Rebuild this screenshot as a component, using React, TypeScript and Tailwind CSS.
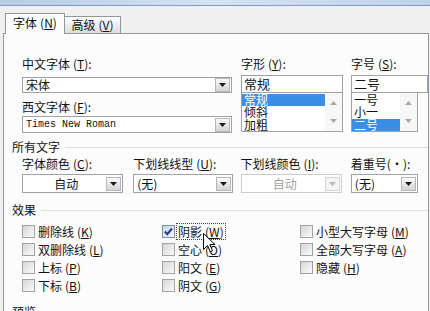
import React from 'react';

const cjk = "font-['Noto_Sans_CJK_SC','Noto_Sans_CJK_JP',sans-serif]";

function Key({ k }: { k: string }) {
  return (
    <span className="ml-[3px]">
      (<span className="underline underline-offset-[1px]">{k}</span>)
    </span>
  );
}

function Label({ text, k, colon = true }: { text: string; k?: string; colon?: boolean }) {
  return (
    <div className="h-[14px] leading-[14px] text-[12px] text-[#111] whitespace-nowrap">
      {text}
      {k && <Key k={k} />}
      {colon && ':'}
    </div>
  );
}

function DropBtn({ disabled }: { disabled?: boolean }) {
  return (
    <div
      className={`mr-px w-[15px] h-[14px] shrink-0 flex items-center justify-center border ${
        disabled ? 'border-[#d3d6da] bg-[#f4f4f4]' : 'border-[#b3b7bc] bg-linear-to-b from-[#fafafa] to-[#d4d4d4]'
      }`}
    >
      <svg width="7" height="4" viewBox="0 0 7 4">
        <path d="M0 0h7L3.5 4z" fill={disabled ? '#b8b8b8' : '#1a1a1a'} />
      </svg>
    </div>
  );
}

function Combo({
  text,
  className,
  center,
  mono,
  disabled,
}: {
  text: string;
  className: string;
  center?: boolean;
  mono?: boolean;
  disabled?: boolean;
}) {
  return (
    <div
      className={`flex items-center bg-white border ${disabled ? 'border-[#c9ccd0]' : 'border-[#9ba2aa]'} ${className}`}
    >
      <div
        className={`flex-1 min-w-0 overflow-hidden whitespace-nowrap pl-[3px] leading-[14px] ${center ? 'text-center' : ''} ${
          mono ? "font-['Liberation_Mono',monospace] text-[10px]" : 'text-[12px]'
        } ${disabled ? 'text-[#a0a0a0]' : 'text-[#111]'}`}
      >
        {text}
      </div>
      <DropBtn disabled={disabled} />
    </div>
  );
}

function ScrollBar() {
  return (
    <div className="w-[17px] shrink-0 bg-[#f7f7f7] flex flex-col items-center justify-between pt-[8px] pb-[8px]">
      <svg width="7" height="4" viewBox="0 0 7 4">
        <path d="M0 4h7L3.5 0z" fill="#a8a8a8" />
      </svg>
      <svg width="7" height="4" viewBox="0 0 7 4">
        <path d="M0 0h7L3.5 4z" fill="#a8a8a8" />
      </svg>
    </div>
  );
}

function ListBox({ items, selected, className }: { items: string[]; selected: number; className: string }) {
  return (
    <div className={`flex border border-[#9ba2aa] bg-white overflow-hidden ${className}`}>
      <div className="flex-1 flex flex-col pt-px">
        {items.map((it, i) => (
          <div
            key={i}
            className={`h-[12.3px] leading-[12px] text-[12px] pl-[2px] overflow-hidden ${
              i === selected ? 'bg-[#3a8ee6] text-white' : 'text-[#111]'
            }`}
          >
            {it}
          </div>
        ))}
      </div>
      <ScrollBar />
    </div>
  );
}

function Section({ title }: { title: string }) {
  return (
    <div className="flex items-center h-[14px] text-[12px] text-[#111]">
      <span className="whitespace-nowrap">{title}</span>
      <div className="flex-1 h-px bg-[#dcdfe3] ml-[5px]" />
    </div>
  );
}

function Box({ checked }: { checked?: boolean }) {
  return (
    <div
      className={`w-[13px] h-[13px] shrink-0 border flex items-center justify-center ${
        checked
          ? 'border-[#7c8ea8] bg-linear-to-br from-[#c9d5e6] to-[#f6f8fc]'
          : 'border-[#a2a2a2] bg-linear-to-br from-[#d6d6d6] to-[#fbfbfb]'
      }`}
    >
      {checked && (
        <svg width="11" height="11" viewBox="0 0 11 11">
          <path d="M2 5.5L4.3 8.2L9 2.5" fill="none" stroke="#1d3c8c" strokeWidth="2" />
        </svg>
      )}
    </div>
  );
}

function CheckItem({ text, k, checked, focus }: { text: string; k: string; checked?: boolean; focus?: boolean }) {
  return (
    <div className="h-[18px] flex items-center">
      <Box checked={checked} />
      <span
        className={`ml-[3px] text-[12px] leading-[13px] whitespace-nowrap text-[#111] ${
          focus ? 'outline-1 outline-dotted outline-[#444] outline-offset-[1px]' : ''
        }`}
      >
        {text}
        <Key k={k} />
      </span>
    </div>
  );
}

export default function App() {
  return (
    <div className={`w-[430px] h-[311px] overflow-hidden bg-[#f0f0f0] relative ${cjk}`}>
      {/* title bar edge */}
      <div className="h-[6px] bg-linear-to-r from-[#b7cbe6] via-[#d4e2f2] to-[#bfd2eb] border-b border-[#7f9cc8]" />

      {/* tabs */}
      <div className="flex items-end pl-[5px] h-[28px] relative z-10">
        <div className="h-[21px] w-[60px] border border-b-0 border-[#8c979f] bg-[#fcfcfc] flex items-center justify-center text-[12px] text-[#111] pb-[2px]">
          字体
          <Key k="N" />
        </div>
        <div className="h-[17px] w-[56px] mb-px border border-l-0 border-b-0 border-[#8c979f] bg-linear-to-b from-[#fdfdfd] to-[#dedede] flex items-center justify-center text-[12px] text-[#111]">
          高级
          <Key k="V" />
        </div>
      </div>

      {/* panel */}
      <div className="-mt-px ml-[3px] w-[426px] h-[300px] border-t border-l border-r border-[#8c979f] bg-[#fcfcfc] pl-[8px]">
        {/* font selection */}
        <div className="flex pl-[10px] pt-[23px]">
          <div className="w-[218px] flex flex-col">
            <Label text="中文字体" k="T" />
            <Combo text="宋体" className="mt-[6px] h-[16px]" />
            <div className="mt-[7px]">
              <Label text="西文字体" k="F" />
            </div>
            <Combo text="Times New Roman" mono className="mt-[2px] h-[17px]" />
          </div>
          <div className="ml-[9px] w-[106px] flex flex-col">
            <Label text="字形" k="Y" />
            <div className="mt-[4px] h-[18px] border border-[#9ba2aa] bg-white text-[13px] leading-[16px] pl-[2px] text-[#111]">常规</div>
            <ListBox items={['常规', '倾斜', '加粗']} selected={0} className="-mt-px h-[40px]" />
          </div>
          <div className="ml-[8px] w-[80px] flex flex-col">
            <Label text="字号" k="S" />
            <div className="mt-[4px] h-[18px] border border-[#9ba2aa] bg-white text-[13px] leading-[16px] pl-[2px] text-[#111]">二号</div>
            <ListBox items={['一号', '小一', '二号']} selected={2} className="-mt-px h-[40px] w-[67px]" />
          </div>
        </div>

        {/* all text */}
        <div className="mt-[7px]">
          <Section title="所有文字" />
        </div>
        <div className="flex pl-[10px] mt-[3px]">
          <div className="w-[105px] flex flex-col">
            <Label text="字体颜色" k="C" />
            <Combo text="自动" center className="mt-[3px] h-[19px]" />
          </div>
          <div className="ml-[10px] w-[103px] flex flex-col">
            <Label text="下划线线型" k="U" />
            <Combo text="(无)" className="mt-[3px] h-[19px]" />
          </div>
          <div className="ml-[8px] w-[105px] flex flex-col">
            <Label text="下划线颜色" k="I" />
            <Combo text="自动" center disabled className="mt-[3px] h-[19px]" />
          </div>
          <div className="ml-[9px] w-[80px] flex flex-col">
            <Label text="着重号(・)" />
            <Combo text="(无)" className="mt-[3px] h-[19px] w-[67px]" />
          </div>
        </div>

        {/* effects */}
        <div className="mt-[10px]">
          <Section title="效果" />
        </div>
        <div className="flex pl-[10px] mt-[5px]">
          <div className="w-[140px] flex flex-col">
            <CheckItem text="删除线" k="K" />
            <CheckItem text="双删除线" k="L" />
            <CheckItem text="上标" k="P" />
            <CheckItem text="下标" k="B" />
          </div>
          <div className="w-[138px] flex flex-col">
            <CheckItem text="阴影" k="W" checked focus />
            <CheckItem text="空心" k="O" />
            <CheckItem text="阳文" k="E" />
            <CheckItem text="阴文" k="G" />
          </div>
          <div className="flex-1 flex flex-col">
            <CheckItem text="小型大写字母" k="M" />
            <CheckItem text="全部大写字母" k="A" />
            <CheckItem text="隐藏" k="H" />
          </div>
        </div>

        <div className="mt-[11px]">
          <Section title="预览" />
        </div>
      </div>

      {/* mouse pointer */}
      <svg className="absolute left-[203px] top-[233px]" width="13" height="20" viewBox="0 0 13 20">
        <path d="M0.5 0.5V16.5L4.5 12.5L7.3 18.8L9.6 17.8L6.9 11.6H12.1Z" fill="#fff" stroke="#000" strokeWidth="1" strokeLinejoin="round" />
      </svg>
    </div>
  );
}
